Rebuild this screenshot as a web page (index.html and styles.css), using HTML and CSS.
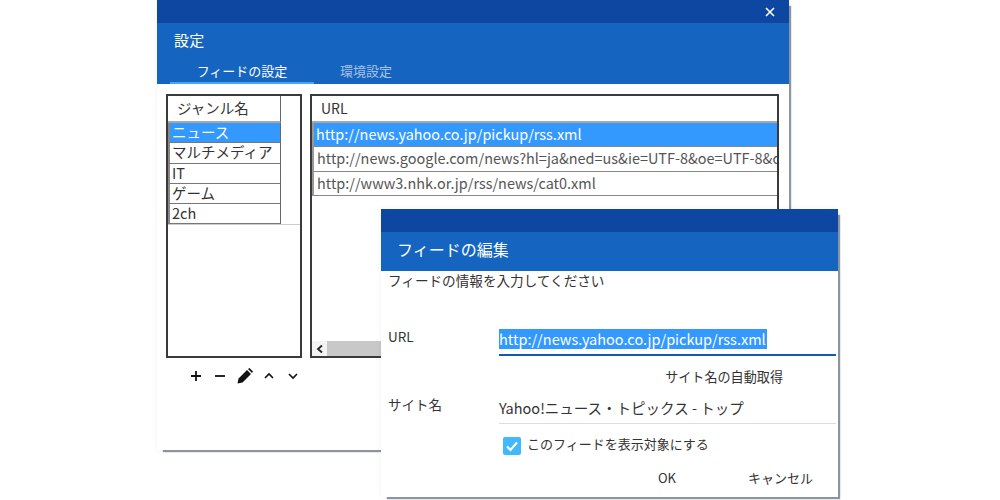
FILE: index.html
```html
<!DOCTYPE html>
<html lang="ja">
<head>
<meta charset="utf-8">
<title>設定</title>
<link rel="stylesheet" href="styles.css">
</head>
<body>
<section class="window main-window">
  <div class="titlebar">
    <svg class="close" viewBox="0 0 10 10" width="10" height="10"><path d="M1 1L9 9M9 1L1 9" stroke="#fff" stroke-width="1.6" fill="none"/></svg>
  </div>
  <header class="app-header">
    <h1 class="app-title">設定</h1>
    <nav class="tabs">
      <span class="tab tab-active">フィードの設定</span>
      <span class="tab tab-idle">環境設定</span>
    </nav>
  </header>
  <div class="settings-body">
    <div class="genre-col">
      <div class="panel genre-panel">
        <div class="genre-table">
          <div class="genre-head">ジャンル名</div>
          <div class="genre-row selected">ニュース</div>
          <div class="genre-row">マルチメディア</div>
          <div class="genre-row">IT</div>
          <div class="genre-row">ゲーム</div>
          <div class="genre-row last">2ch</div>
        </div>
      </div>
      <div class="toolbar">
        <svg viewBox="0 0 12 12" width="12" height="12"><path d="M6 1V11M1 6H11" stroke="#111" stroke-width="1.8" fill="none"/></svg>
        <svg viewBox="0 0 12 12" width="12" height="12"><path d="M1 6H11" stroke="#111" stroke-width="1.8" fill="none"/></svg>
        <svg viewBox="0 0 16 16" width="16" height="16"><path d="M0.500 15.500L1.500 10.500L10 2L14 6L5.500 14.500Z M11 1L12.500 0L16 3.500L15 5Z" fill="#111"/></svg>
        <svg viewBox="0 0 12 12" width="12" height="12"><path d="M2 8L6 4L10 8" stroke="#111" stroke-width="1.6" fill="none"/></svg>
        <svg viewBox="0 0 12 12" width="12" height="12"><path d="M2 4L6 8L10 4" stroke="#111" stroke-width="1.6" fill="none"/></svg>
      </div>
    </div>
    <div class="panel url-panel">
      <div class="url-head">URL</div>
      <div class="url-row selected">http://news.yahoo.co.jp/pickup/rss.xml</div>
      <div class="url-row">http://news.google.com/news?hl=ja&amp;ned=us&amp;ie=UTF-8&amp;oe=UTF-8&amp;output=rss</div>
      <div class="url-row">http://www3.nhk.or.jp/rss/news/cat0.xml</div>
      <div class="url-spacer"></div>
      <div class="scrollbar">
        <span class="scroll-btn"><svg viewBox="0 0 8 10" width="8" height="10"><path d="M6 1.500L2 5L6 8.500" stroke="#222" stroke-width="1.8" fill="none"/></svg></span>
        <span class="scroll-thumb"></span>
      </div>
    </div>
  </div>
</section>

<section class="window edit-dialog">
  <div class="titlebar"></div>
  <header class="dialog-header">フィードの編集</header>
  <div class="dialog-body">
    <p class="prompt">フィードの情報を入力してください</p>
    <div class="field url-field">
      <span class="field-label">URL</span>
      <div class="input input-active"><span class="selection">http://news.yahoo.co.jp/pickup/rss.xml</span></div>
    </div>
    <div class="auto-row"><span>サイト名の自動取得</span></div>
    <div class="field name-field">
      <span class="field-label">サイト名</span>
      <div class="input input-idle">Yahoo!ニュース・トピックス - トップ</div>
    </div>
    <label class="check-row">
      <span class="checkbox"><svg viewBox="0 0 18 18" width="18" height="18"><path d="M4 9.500L7.500 13L14 5.500" stroke="#fff" stroke-width="2.2" fill="none"/></svg></span>
      <span>このフィードを表示対象にする</span>
    </label>
    <div class="actions">
      <span class="action">OK</span>
      <span class="action">キャンセル</span>
    </div>
  </div>
</section>
</body>
</html>
```

FILE: styles.css
```css
html, body { margin: 0; padding: 0; }
body {
  width: 1000px;
  height: 500px;
  position: relative;
  overflow: hidden;
  background: #fff;
  font-family: "Noto Sans CJK JP", "Noto Sans", sans-serif;
  color: #333;
}
.window {
  position: absolute;
  background: #fff;
  display: flex;
  flex-direction: column;
  box-shadow: 4px 4px 1px -2px #8c93a1, 0 0 6px rgba(0, 0, 0, 0.06);
}
.main-window { left: 157px; top: 0; width: 632px; height: 450px; }
.edit-dialog { left: 381px; top: 209px; width: 457px; height: 288px; }
.titlebar {
  height: 23px;
  background: #0d47a1;
  display: flex;
  align-items: center;
  justify-content: flex-end;
  flex: none;
}
.close { margin-right: 14px; }
.app-header { height: 61px; background: #1565c0; flex: none; color: #fff; display: flex; flex-direction: column; }
.app-title { margin: 6px 0 0 17px; font-size: 15px; line-height: 22px; font-weight: 400; letter-spacing: 0.3px; }
.tabs { display: flex; margin: 7px 0 0 13px; }
.tab {
  height: 26px;
  box-sizing: border-box;
  font-size: 13px;
  line-height: 26px;
}
.tab-active { width: 144px; text-align: center; color: #fff; border-bottom: 2px solid #42a5f5; }
.tab-idle { padding-left: 26px; color: #a9c4e6; }
.settings-body { display: flex; gap: 9px; padding: 10px 0 0 9px; align-items: flex-start; }
.panel { border: 2px solid #3a3a3a; box-sizing: border-box; height: 264px; background: #fff; }
.genre-col { width: 136px; display: flex; flex-direction: column; }
.genre-panel { width: 136px; }
.genre-table { border-bottom: 1px solid #ccc; }
.genre-head {
  width: 113px;
  height: 27px;
  box-sizing: border-box;
  border-right: 1px solid #666;
  border-bottom: 2px solid #a8a8a8;
  padding-left: 9px;
  font-size: 14.500px;
  line-height: 24px;
}
.genre-row {
  width: 113px;
  height: 20.300px;
  box-sizing: border-box;
  border-right: 1px solid #666;
  border-bottom: 1px solid #777;
  border-left: 2px solid #888;
  padding-left: 2px;
  font-size: 14.500px;
  line-height: 18px;
  white-space: nowrap;
}
.genre-row.selected { background: #3399ff; color: #fff; }
.toolbar { display: flex; align-items: center; height: 18px; margin-top: 9px; padding-left: 24px; gap: 12px; }
.toolbar svg:nth-child(3) { margin: 0 -1.500px; }
.url-panel { width: 469px; margin-left: -1px; display: flex; flex-direction: column; overflow: hidden; }
.url-head {
  height: 27px;
  flex: none;
  box-sizing: border-box;
  border-bottom: 2px solid #a8a8a8;
  padding-left: 9px;
  font-size: 14px;
  line-height: 24px;
}
.url-row {
  height: 24.300px;
  flex: none;
  box-sizing: border-box;
  border-bottom: 1px solid #888;
  border-left: 2px solid #999;
  padding-left: 3px;
  font-size: 14.450px;
  line-height: 22px;
  color: #555;
  white-space: nowrap;
  overflow: hidden;
}
.url-row.selected { background: #3399ff; color: #fff; padding-left: 2px; }
.url-spacer { flex: 1; }
.scrollbar { height: 15px; flex: none; display: flex; background: #f3f3f3; }
.scroll-btn { width: 15px; display: flex; align-items: center; justify-content: center; }
.scroll-thumb { flex: 1; background: #c8c8c8; }
.dialog-header {
  height: 39px;
  flex: none;
  background: #1565c0;
  color: #fff;
  font-size: 16px;
  line-height: 35px;
  padding-left: 16px;
}
.dialog-body { flex: 1; display: flex; flex-direction: column; padding: 0 2px 0 7px; }
.prompt { margin: -1px 0 0; font-size: 13.600px; line-height: 20px; color: #333; }
.field { display: flex; }
.field-label { width: 111px; flex: none; font-size: 13.500px; line-height: 18px; }
.url-field { margin-top: 38px; }
.url-field .field-label { margin-top: -1px; }
.input { flex: 1; box-sizing: border-box; white-space: nowrap; }
.input-active { height: 27px; border-bottom: 2px solid #1259b0; margin-top: 1px; font-size: 14px; line-height: 20px; }
.selection { display: inline-block; background: #3399ff; color: #fff; height: 20px; line-height: 20px; font-size: 14.500px; padding: 0 1px 0 0; }
.auto-row { display: flex; justify-content: flex-end; padding-right: 53px; margin-top: 12px; font-size: 13.100px; line-height: 18px; }
.name-field { margin-top: 9px; }
.input-idle { height: 29px; border-bottom: 1px solid #ddd; font-size: 14.500px; line-height: 25px; color: #333; }
.check-row { display: flex; align-items: center; gap: 6px; margin: 9px 0 0 115px; font-size: 13px; line-height: 18px; }
.checkbox { width: 18px; height: 18px; margin-top: 4px; background: #40b9ff; border-radius: 2px; display: block; }
.checkbox svg { display: block; }
.actions { display: flex; justify-content: flex-end; margin-top: 14px; padding-right: 23px; gap: 72px; font-size: 13px; line-height: 18px; }
```
